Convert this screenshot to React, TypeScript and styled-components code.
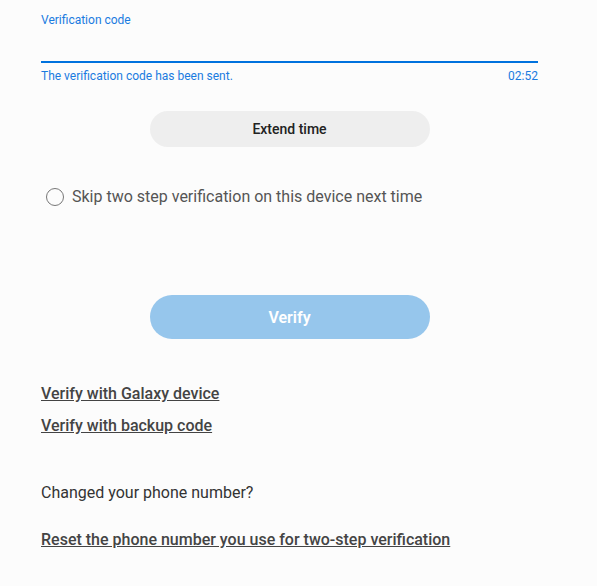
import React, { useState } from 'react';
import styled, { createGlobalStyle } from 'styled-components';

const GlobalStyle = createGlobalStyle`
  body {
    margin: 0;
    background: #fcfcfc;
    font-family: Roboto, "Noto Sans", sans-serif;
  }
`;

const Page = styled.div`
  width: 597px;
  height: 586px;
  padding: 12px 59px 0 41px;
  box-sizing: border-box;
  display: flex;
  flex-direction: column;
`;

const Field = styled.div`
  display: flex;
  flex-direction: column;
`;

const Label = styled.label`
  font-size: 12px;
  line-height: 16px;
  color: #1a7be0;
`;

const CodeInput = styled.input`
  height: 33px;
  border: none;
  border-bottom: 2px solid #0072de;
  background: transparent;
  outline: none;
  font: inherit;
  font-size: 16px;
  padding: 0;
`;

const HelpRow = styled.div`
  display: flex;
  justify-content: space-between;
  margin-top: 5px;
  font-size: 12px;
  line-height: 16px;
  color: #1a7be0;
`;

const Button = styled.button<{ $primary?: boolean }>`
  align-self: center;
  width: 280px;
  height: ${(p) => (p.$primary ? 44 : 36)}px;
  margin-top: ${(p) => (p.$primary ? 89 : 27)}px;
  border: none;
  border-radius: 22px;
  background: ${(p) => (p.$primary ? '#96c6ec' : '#eeeeee')};
  color: ${(p) => (p.$primary ? '#ffffff' : '#222222')};
  font-family: inherit;
  font-size: ${(p) => (p.$primary ? 16 : 14)}px;
  font-weight: ${(p) => (p.$primary ? 600 : 500)};
  cursor: pointer;
`;

const RadioRow = styled.label`
  display: flex;
  align-items: center;
  gap: 8px;
  margin: 40px 0 0 5px;
  font-size: 16px;
  color: #555555;
  cursor: pointer;
`;

const Radio = styled.span<{ $on: boolean }>`
  width: 18px;
  height: 18px;
  border-radius: 50%;
  border: 1.5px solid #777777;
  box-sizing: border-box;
  background: ${(p) => (p.$on ? '#0072de' : 'transparent')};
`;

const Links = styled.nav`
  display: flex;
  flex-direction: column;
  align-items: flex-start;
  gap: 10px;
  margin-top: 44px;
`;

const LinkText = styled.a`
  font-size: 16px;
  font-weight: 500;
  color: #444444;
  text-decoration: underline;
  line-height: 22px;
`;

const PhoneSection = styled.section`
  display: flex;
  flex-direction: column;
  align-items: flex-start;
  gap: 25px;
  margin-top: 45px;
`;

const Plain = styled.p`
  margin: 0;
  font-size: 16px;
  line-height: 22px;
  color: #333333;
`;

export default function App() {
  const [skip, setSkip] = useState(false);

  return (
    <Page>
      <GlobalStyle />
      <Field>
        <Label>Verification code</Label>
        <CodeInput />
        <HelpRow>
          <span>The verification code has been sent.</span>
          <span>02:52</span>
        </HelpRow>
      </Field>
      <Button>Extend time</Button>
      <RadioRow onClick={() => setSkip(!skip)}>
        <Radio $on={skip} />
        Skip two step verification on this device next time
      </RadioRow>
      <Button $primary>Verify</Button>
      <Links>
        <LinkText>Verify with Galaxy device</LinkText>
        <LinkText>Verify with backup code</LinkText>
      </Links>
      <PhoneSection>
        <Plain>Changed your phone number?</Plain>
        <LinkText>Reset the phone number you use for two-step verification</LinkText>
      </PhoneSection>
    </Page>
  );
}
